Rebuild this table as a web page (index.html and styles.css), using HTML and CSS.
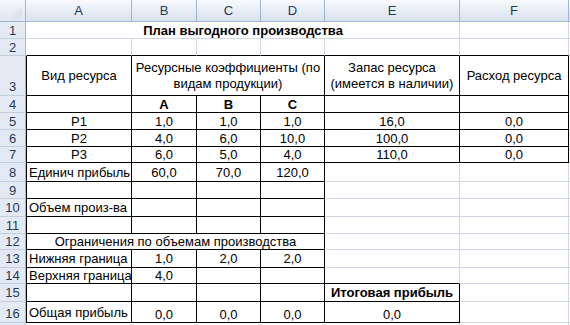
FILE: index.html
```html
<!DOCTYPE html>
<html lang="ru">
<head>
<meta charset="utf-8">
<title>План выгодного производства</title>
<link rel="stylesheet" href="styles.css">
</head>
<body>
<div class="sheet">
  <!-- header row -->
  <div class="corner"><svg class="tri" width="26" height="22" viewBox="0 0 26 22"><polygon points="10,19 22,19 22,7" fill="#DDE3EA"/></svg></div>
  <div class="hc">A</div>
  <div class="hc">B</div>
  <div class="hc">C</div>
  <div class="hc">D</div>
  <div class="hc">E</div>
  <div class="hc">F</div>
  <div class="hc"></div>

  <!-- row 1 -->
  <div class="hr">1</div>
  <div class="c a span5 ctr bold">План выгодного производства</div>
  <div class="c"></div>
  <div class="c"></div>

  <!-- row 2 -->
  <div class="hr">2</div>
  <div class="c a B"></div>
  <div class="c B"></div>
  <div class="c B"></div>
  <div class="c B"></div>
  <div class="c B"></div>
  <div class="c B"></div>
  <div class="c"></div>

  <!-- row 3 -->
  <div class="hr bot">3</div>
  <div class="c a L R B ctr">Вид ресурса</div>
  <div class="c R B ctr span3 wrap">Ресурсные коэффициенты (по<br>видам продукции)</div>
  <div class="c R B ctr wrap">Запас ресурса<br>(имеется в наличии)</div>
  <div class="c R B ctr">Расход ресурса</div>
  <div class="c"></div>

  <!-- row 4 -->
  <div class="hr">4</div>
  <div class="c a L R B"></div>
  <div class="c R B ctr bold">А</div>
  <div class="c R B ctr bold">B</div>
  <div class="c R B ctr bold">C</div>
  <div class="c R B"></div>
  <div class="c R B"></div>
  <div class="c"></div>

  <!-- row 5 -->
  <div class="hr">5</div>
  <div class="c a L R B ctr">Р1</div>
  <div class="c R B ctr">1,0</div>
  <div class="c R B ctr">1,0</div>
  <div class="c R B ctr">1,0</div>
  <div class="c R B ctr">16,0</div>
  <div class="c R B ctr">0,0</div>
  <div class="c"></div>

  <!-- row 6 -->
  <div class="hr">6</div>
  <div class="c a L R B ctr">Р2</div>
  <div class="c R B ctr">4,0</div>
  <div class="c R B ctr">6,0</div>
  <div class="c R B ctr">10,0</div>
  <div class="c R B ctr">100,0</div>
  <div class="c R B ctr">0,0</div>
  <div class="c"></div>

  <!-- row 7 -->
  <div class="hr">7</div>
  <div class="c a L R B ctr">Р3</div>
  <div class="c R B ctr">6,0</div>
  <div class="c R B ctr">5,0</div>
  <div class="c R B ctr">4,0</div>
  <div class="c R B ctr">110,0</div>
  <div class="c R B ctr">0,0</div>
  <div class="c"></div>

  <!-- row 8 -->
  <div class="hr">8</div>
  <div class="c a L R B">Единич прибыль</div>
  <div class="c R B ctr">60,0</div>
  <div class="c R B ctr">70,0</div>
  <div class="c R B ctr">120,0</div>
  <div class="c"></div>
  <div class="c"></div>
  <div class="c"></div>

  <!-- row 9 -->
  <div class="hr">9</div>
  <div class="c a L R B"></div>
  <div class="c R B"></div>
  <div class="c R B"></div>
  <div class="c R B"></div>
  <div class="c"></div>
  <div class="c"></div>
  <div class="c"></div>

  <!-- row 10 -->
  <div class="hr">10</div>
  <div class="c a L R B">Объем произ-ва</div>
  <div class="c R B"></div>
  <div class="c R B"></div>
  <div class="c R B"></div>
  <div class="c"></div>
  <div class="c"></div>
  <div class="c"></div>

  <!-- row 11 -->
  <div class="hr">11</div>
  <div class="c a L R B"></div>
  <div class="c R B"></div>
  <div class="c R B"></div>
  <div class="c R B"></div>
  <div class="c"></div>
  <div class="c"></div>
  <div class="c"></div>

  <!-- row 12 -->
  <div class="hr">12</div>
  <div class="c a L R B ctr span4">Ограничения по объемам производства</div>
  <div class="c"></div>
  <div class="c"></div>
  <div class="c"></div>

  <!-- row 13 -->
  <div class="hr">13</div>
  <div class="c a L R B">Нижняя граница</div>
  <div class="c R B ctr">1,0</div>
  <div class="c R B ctr">2,0</div>
  <div class="c R B ctr">2,0</div>
  <div class="c"></div>
  <div class="c"></div>
  <div class="c"></div>

  <!-- row 14 -->
  <div class="hr">14</div>
  <div class="c a L R B">Верхняя граница</div>
  <div class="c R B ctr">4,0</div>
  <div class="c R B"></div>
  <div class="c R B"></div>
  <div class="c B"></div>
  <div class="c"></div>
  <div class="c"></div>

  <!-- row 15 -->
  <div class="hr">15</div>
  <div class="c a L R B"></div>
  <div class="c R B"></div>
  <div class="c R B"></div>
  <div class="c R B"></div>
  <div class="c R B ctr bold">Итоговая прибыль</div>
  <div class="c"></div>
  <div class="c"></div>

  <!-- row 16 -->
  <div class="hr bot">16</div>
  <div class="c a L R B">Общая прибыль</div>
  <div class="c R B ctr bot">0,0</div>
  <div class="c R B ctr bot">0,0</div>
  <div class="c R B ctr bot">0,0</div>
  <div class="c R B ctr bot">0,0</div>
  <div class="c"></div>
  <div class="c"></div>

  <!-- row 17 (only its top edge is visible) -->
  <div class="hr"></div>
  <div class="c a"></div>
  <div class="c"></div>
  <div class="c"></div>
  <div class="c"></div>
  <div class="c"></div>
  <div class="c"></div>
  <div class="c"></div>
</div>
</body>
</html>
```
FILE: styles.css
```css
html, body {
  margin: 0;
  padding: 0;
  background: #ffffff;
  overflow: hidden;
}

.sheet {
  display: grid;
  grid-template-columns: 26px 106px 65px 64px 64px 135px 109px 1fr;
  grid-template-rows: 22px 17px 17px 40px 17px 17px 17px 16px 19px 17px 18px 17px 16px 18px 16px 18px 21px 20px;
  width: 570px;
  height: 325px;
  overflow: hidden;
  font-family: "Liberation Sans", Arial, sans-serif;
  font-size: 13px;
  line-height: 15px;
  color: #000000;
}

.c {
  box-sizing: border-box;
  border-right: 1px solid #D0D7E5;
  border-bottom: 1px solid #D0D7E5;
  display: flex;
  align-items: center;
  padding: 0 2px;
  white-space: nowrap;
  min-width: 0;
}

.a { border-left: 1px solid #ffffff; }
.L { border-left-color: #000000; }
.R { border-right-color: #000000; }
.B { border-bottom-color: #000000; }

.ctr { justify-content: center; }
.wrap { text-align: center; line-height: 16px; }
.bold { font-weight: bold; }
.bot { align-items: flex-end; }
.c.bot { padding-bottom: 0; }

.span3 { grid-column: span 3; }
.span4 { grid-column: span 4; }
.span5 { grid-column: span 5; }

.corner {
  box-sizing: border-box;
  background: linear-gradient(#F4F7FB, #DFE6F0);
  border-right: 1px solid #9EB6CE;
  border-bottom: 1px solid #9EB6CE;
  position: relative;
}
.tri { position: absolute; left: 0; top: 0; }

.hc {
  box-sizing: border-box;
  background: linear-gradient(#F8FAFD, #E6ECF4 55%, #DAE2ED);
  border-right: 1px solid #9EB6CE;
  border-bottom: 1px solid #9EB6CE;
  display: flex;
  align-items: center;
  justify-content: center;
  color: #27395A;
}

.hr {
  box-sizing: border-box;
  background: #E4EAF3;
  border-right: 1px solid #9EB6CE;
  border-bottom: 1px solid #C3CFDF;
  display: flex;
  align-items: center;
  justify-content: center;
  color: #27395A;
}
.hr.bot { align-items: flex-end; padding-bottom: 1px; }
```
